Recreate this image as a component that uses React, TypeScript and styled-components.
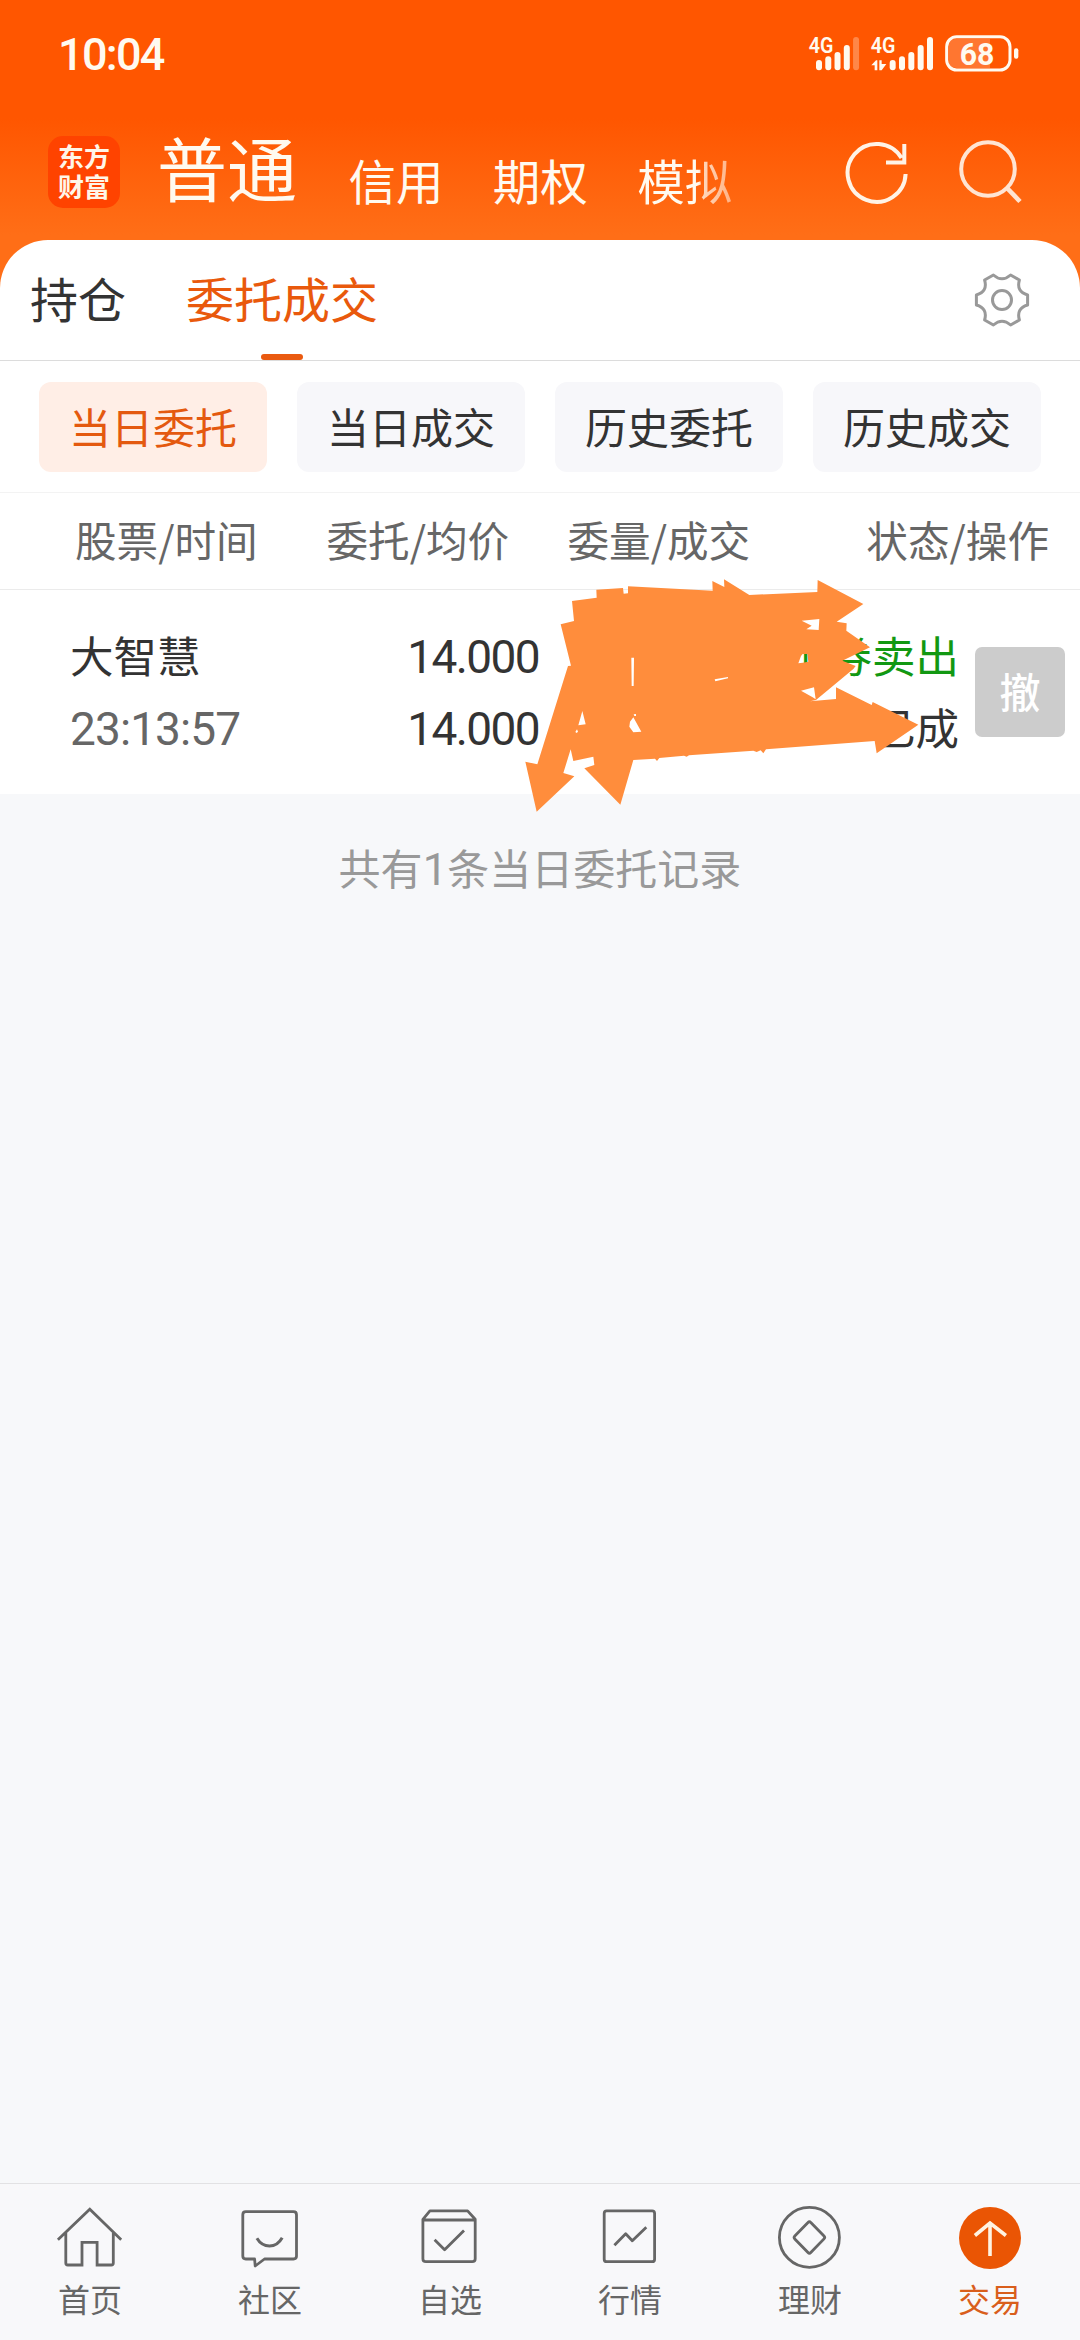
import React from "react";
import styled, { createGlobalStyle } from "styled-components";

const cjk = `"Noto Sans CJK SC", "Noto Sans", sans-serif`;
const digits = `Roboto, "Noto Sans CJK SC", sans-serif`;

const GlobalStyle = createGlobalStyle`
  * { box-sizing: border-box; }
  body { margin: 0; background: #f7f8fa; font-family: ${cjk}; }
`;

const Screen = styled.div`
  width: 1080px;
  height: 2340px;
  display: flex;
  flex-direction: column;
  background: #f7f8fa;
  overflow: hidden;
`;

const Top = styled.header`
  height: 290px;
  flex: none;
  background: linear-gradient(#ff5600 0, #ff5600 118px, #ff6e17 235px, #ff6e17 100%);
`;

const StatusBar = styled.div`
  height: 110px;
  padding: 25px 50px 0 58px;
  display: flex;
  justify-content: space-between;
`;

const Clock = styled.span`
  font: 500 45px/60px ${digits};
  letter-spacing: -1.7px;
  color: #fffaf0;
`;

const TitleBar = styled.div`
  height: 130px;
  padding: 0 58px 0 48px;
  display: flex;
  align-items: flex-start;
`;

const Logo = styled.div`
  width: 72px;
  height: 72px;
  margin-top: 26px;
  padding: 5px 0 0;
  border-radius: 15px;
  background: #ff4300;
  color: #fff6e8;
  font-size: 26px;
  font-weight: 700;
  text-align: center;
`;

const LogoLine = styled.span`
  display: block;
  height: 30px;
  line-height: 30px;
`;

const Account = styled.span<{ $main?: boolean; $faded?: boolean }>`
  font-size: ${(p) => (p.$main ? 70 : 47.5)}px;
  line-height: 80px;
  margin-top: ${(p) => (p.$main ? 17 : 30)}px;
  margin-left: ${(p) => (p.$main ? 37 : 49.4)}px;
  margin-right: ${(p) => (p.$main ? 2 : 0)}px;
  color: #fffaf0;
  white-space: nowrap;
  ${(p) =>
    p.$faded &&
    `background: linear-gradient(90deg, #fffaf0 64%, #ffd9bd 68%, #ffb184 100%);
     -webkit-background-clip: text; background-clip: text; color: transparent;`}
`;

const Actions = styled.div`
  margin-left: auto;
  margin-top: 28px;
  display: flex;
  gap: 44px;
`;

const Sheet = styled.main`
  flex: none;
  margin-top: -50px;
  background: #fff;
  border-radius: 48px 48px 0 0;
`;

const Tabs = styled.nav`
  height: 121px;
  padding: 0 48px 0 30px;
  display: flex;
  align-items: stretch;
  border-bottom: 1px solid #dcdcdc;
`;

const Tab = styled.div<{ $active?: boolean }>`
  font-size: 48px;
  line-height: 60px;
  padding-top: 27px;
  margin-right: 60px;
  display: flex;
  flex-direction: column;
  justify-content: space-between;
  align-items: center;
  color: ${(p) => (p.$active ? "#e9590c" : "#333")};
`;

const Underline = styled.i`
  width: 42px;
  height: 6px;
  border-radius: 3px;
  background: #ea5a10;
`;

const Settings = styled.div`
  margin: 30px 0 0 auto;
  height: 60px;
`;

const Filters = styled.div`
  height: 132px;
  padding: 21px 39px;
  display: grid;
  grid-template-columns: repeat(4, 228px);
  gap: 30px;
  border-bottom: 1px solid #f3f3f3;
`;

const Filter = styled.button<{ $active?: boolean }>`
  border: 0;
  height: 90px;
  padding: 0 0 2px;
  border-radius: 12px;
  font: 400 42px/60px ${cjk};
  background: ${(p) => (p.$active ? "#ffeee6" : "#f7f7fa")};
  color: ${(p) => (p.$active ? "#e4590f" : "#333")};
`;

const TableHead = styled.div`
  height: 97px;
  padding: 16px 31px 0 75px;
  display: grid;
  grid-template-columns: 251.5px 241px 1fr auto;
  font-size: 41.6px;
  line-height: 60px;
  color: #666;
  border-bottom: 1px solid #ebebeb;
`;

const OrderRow = styled.div`
  position: relative;
  height: 204px;
  padding: 30px 15px 0 70px;
  display: flex;
`;

const Cell = styled.div<{ $w: number; $right?: boolean }>`
  width: ${(p) => p.$w}px;
  padding-top: 5px;
  display: flex;
  flex-direction: column;
  gap: 12px;
  text-align: ${(p) => (p.$right ? "right" : "left")};
  white-space: nowrap;
`;

const Line = styled.span<{ $c?: string; $size?: number }>`
  font-size: ${(p) => p.$size ?? 43.5}px;
  line-height: 60px;
  height: 60px;
  color: ${(p) => p.$c ?? "#333"};
`;

const Num = styled(Line)<{ $tight?: boolean }>`
  font-family: ${digits};
  font-size: 46px;
  letter-spacing: ${(p) => (p.$tight ? -1.6 : -0.9)}px;
  padding-top: 2px;
`;

const Cancel = styled.button`
  margin: 27px 0 0 auto;
  width: 90px;
  height: 90px;
  border: 0;
  border-radius: 7px;
  padding: 0 0 4px;
  background: #ccc;
  color: #fff;
  font: 500 41px/60px ${cjk};
`;

const Scribble = styled.svg`
  position: absolute;
  left: 520px;
  top: -20px;
`;

const Summary = styled.p`
  margin: 0;
  padding-top: 43px;
  text-align: center;
  font-size: 42px;
  line-height: 60px;
  color: #999;
`;

const One = styled.span`
  font-family: ${digits};
  font-size: 44px;
  line-height: 1;
`;

const Footer = styled.footer`
  margin-top: auto;
  height: 157px;
  flex: none;
  padding-top: 16px;
  display: grid;
  grid-template-columns: repeat(6, 180px);
  border-top: 1px solid #e2e2e4;
  background: #f8f8fa;
`;

const FooterItem = styled.div<{ $active?: boolean }>`
  display: flex;
  flex-direction: column;
  align-items: center;
  font-size: 32px;
  line-height: 40px;
  gap: 6px;
  color: ${(p) => (p.$active ? "#d95e1c" : "#666")};
`;

const signal = [
  [105, 31],
  [94, 42],
  [81, 55],
  [60, 76],
  [36, 100],
];

const StatusIcons = () => (
  <svg width="230" height="60" viewBox="0 0 690 180" fill="#fffaf0" fontFamily="Roboto, sans-serif" fontWeight="700">
    <text x="26" y="83" fontSize="64" textLength="74" lengthAdjust="spacingAndGlyphs" fontWeight="600">4G</text>
    <text x="212" y="83" fontSize="64" textLength="74" lengthAdjust="spacingAndGlyphs" fontWeight="600">4G</text>
    {signal.map(([y, h], i) => (
      <rect key={y} x={48 + i * 27.8} y={y} width="18" height={h} rx="9" opacity={i === 4 ? 0.3 : 1} />
    ))}
    {signal.map(([y, h], i) => (
      <rect key={y} x={269 + i * 28} y={y} width="18" height={h} rx="9" />
    ))}
    <path d="M214 121L228 106H232V136H224V121ZM238 106H245V117H259L245 136H238Z" />
    <rect x="440" y="35" width="190" height="100" rx="30" fill="none" stroke="#fffaf0" strokeWidth="9" />
    <path d="M470 41H570V129H470Q446 129 446 105V65Q446 41 470 41Z" opacity=".2" />
    <rect x="642" y="70" width="13" height="31" rx="6" />
    <text x="479" y="120" fontSize="94" textLength="104" lengthAdjust="spacingAndGlyphs">68</text>
  </svg>
);

const Refresh = () => (
  <svg width="68" height="68" viewBox="841 138 68 68" fill="none" stroke="#fff3e6" strokeWidth="4">
    <path d="M904.6 174A29 29 0 1 1 900.5 158M903.3 144V162.5H885" />
  </svg>
);

const Search = () => (
  <svg width="68" height="68" viewBox="953 138 68 68" fill="none" stroke="#ffe4d2" strokeWidth="4">
    <circle cx="987" cy="169" r="26.8" />
    <path d="M1005.5 187.5L1019 201.5" strokeWidth="4.6" />
  </svg>
);

const Gear = () => (
  <svg width="60" height="60" viewBox="-30 -30 60 60" fill="none" stroke="#999" strokeWidth="3" strokeLinejoin="round">
    {/* six teeth joined by concave arcs */}
    <path d="M-8.6-25Q0-17.4 8.6-25L17.4-20Q14-8.4 25.6-5V5Q14 8.4 17.4 20L8.6 25Q0 17.4-8.6 25L-17.4 20Q-14 8.4-25.6 5V-5Q-14-8.4-17.4-20Z" />
    <circle r="9.5" />
  </svg>
);

const scribblePath =
  "M122 163L162 153L156 93L230 83L229 59L309 54L311 71L324 70L324 49L578 62L577 33L613 51L612 28L688 75L892 66L893 30L1030 102L950 155L980 160L979 182L1050 232L967 272L1007 288L1000 297L888 390L870 394L948 387L948 352L1055 405L1058 396L1195 464L1070 550L1064 513L738 538L730 550L722 541L710 546L700 542L507 556L500 560L492 557L418 564L411 573L405 566L340 570L301 704L193 595L223 585L220 560L160 573L152 538L130 609L163 619L50 725L16 575L52 583L144 288L153 287Z" +
  "M334 263H342L341 348H335ZM584 328L624 321V325L586 334ZM187 423L197 463L175 466ZM330 455L340 442L364 485L340 487L328 470ZM845 152L898 147L896 180L859 178L875 167ZM835 280L843 258L848 252H862L865 275L848 278ZM843 362L882 352L887 388L878 382ZM166 486L171 478L174 485L170 489ZM341 433L348 432L348 438L343 438Z";

const NavIcon = ({ children }: { children: React.ReactNode }) => (
  <svg width="72" height="72" viewBox="0 0 72 72" fill="none" stroke="#666" strokeWidth="2.8" strokeLinejoin="round">
    {children}
  </svg>
);

const nav = [
  {
    label: "首页",
    icon: <path d="M3.9 39.7L35.8 9.3L67.2 39.7M11.8 33V63Q11.8 65 13.8 65H28V42.3H43.1V65H57.3Q59.3 65 59.3 63V33" strokeLinejoin="miter" />,
  },
  {
    label: "社区",
    icon: (
      <>
        <path d="M11.8 11.7H59.5Q62.5 11.7 62.5 14.7V56Q62.5 59 59.5 59H30.5L21.2 66L20.6 59H11.8Q8.8 59 8.8 56V14.7Q8.8 11.7 11.8 11.7Z" />
        <path d="M22.9 38.3Q27.5 46 35.5 46Q43.5 46 48.2 37.7" strokeWidth="3" />
      </>
    ),
  },
  {
    label: "自选",
    icon: <path d="M8.9 19.3L15.9 10.9H53.6L61.2 19.3V58.7Q61.2 61.7 58.2 61.7H11.9Q8.9 61.7 8.9 58.7ZM8.9 20H61.2M20.6 39.7L30.6 49.7L50 30.5" />,
  },
  {
    label: "行情",
    icon: (
      <>
        <rect x="10.2" y="10.9" width="50.4" height="50.8" rx="2.5" />
        <path d="M20.4 45.3L31.7 33.8L38.3 40.7L52.3 27.3" />
      </>
    ),
  },
  {
    label: "理财",
    icon: (
      <>
        <circle cx="35.4" cy="37.4" r="30" />
        <path d="M34 22.5Q35.4 21 36.8 22.5L50 36Q51.4 37.4 50 38.9L36.8 52.5Q35.4 54 34 52.5L20.8 38.9Q19.4 37.4 20.8 36Z" />
      </>
    ),
  },
  {
    label: "交易",
    icon: (
      <>
        <circle cx="36" cy="38" r="31" fill="#ea5504" stroke="none" />
        <path d="M20.9 35.5L36 23L51.9 35.5M36 23V56" stroke="#fff3e2" strokeWidth="3.6" strokeLinejoin="miter" />
      </>
    ),
  },
];

export default function App() {
  return (
    <>
      <GlobalStyle />
      <Screen>
        <Top>
          <StatusBar>
            <Clock>10:04</Clock>
            <StatusIcons />
          </StatusBar>
          <TitleBar>
            <Logo>
              <LogoLine>东方</LogoLine>
              <LogoLine>财富</LogoLine>
            </Logo>
            <Account $main>普通</Account>
            <Account>信用</Account>
            <Account>期权</Account>
            <Account $faded>模拟</Account>
            <Actions>
              <Refresh />
              <Search />
            </Actions>
          </TitleBar>
        </Top>
        <Sheet>
          <Tabs>
            <Tab>持仓</Tab>
            <Tab $active>
              委托成交
              <Underline />
            </Tab>
            <Settings>
              <Gear />
            </Settings>
          </Tabs>
          <Filters>
            <Filter $active>当日委托</Filter>
            <Filter>当日成交</Filter>
            <Filter>历史委托</Filter>
            <Filter>历史成交</Filter>
          </Filters>
          <TableHead>
            <span>股票/时间</span>
            <span>委托/均价</span>
            <span>委量/成交</span>
            <span>状态/操作</span>
          </TableHead>
          <OrderRow>
            <Cell $w={230}>
              <Line>大智慧</Line>
              <Num $c="#666">23:13:57</Num>
            </Cell>
            <Cell $w={239} $right>
              <Num $tight>14.000</Num>
              <Num $tight>14.000</Num>
            </Cell>
            <Cell $w={420} $right>
              <Line $c="#129812">证券卖出</Line>
              <Line>已成</Line>
            </Cell>
            <Cancel>撤</Cancel>
            <Scribble width="450" height="250" viewBox="0 0 1350 750">
              <path d={scribblePath} fill="#ff8d3c" fillRule="evenodd" />
            </Scribble>
          </OrderRow>
        </Sheet>
        <Summary>
          共有<One>1</One>条当日委托记录
        </Summary>
        <Footer>
          {nav.map((item, i) => (
            <FooterItem key={item.label} $active={i === 5}>
              <NavIcon>{item.icon}</NavIcon>
              {item.label}
            </FooterItem>
          ))}
        </Footer>
      </Screen>
    </>
  );
}
